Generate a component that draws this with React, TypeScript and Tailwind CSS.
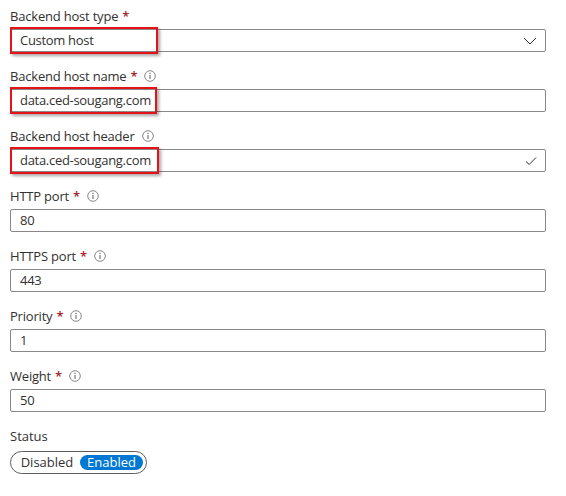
import React from "react";

const font = { fontFamily: '"Open Sans", "Noto Sans", sans-serif' };

function InfoIcon() {
    return (
        <svg width="12" height="12" viewBox="0 0 12 12" className="ml-[7px]">
            <circle cx="6" cy="6" r="5.3" fill="none" stroke="#8a8886" strokeWidth="1" />
            <line x1="6" y1="5" x2="6" y2="9" stroke="#605e5c" strokeWidth="1" />
            <circle cx="6" cy="3.4" r="0.7" fill="#605e5c" />
        </svg>
    );
}

function Chevron() {
    return (
        <svg width="14" height="8" viewBox="0 0 14 8">
            <path d="M1 1 L7 7 L13 1" fill="none" stroke="#323130" strokeWidth="1" />
        </svg>
    );
}

function Check() {
    return (
        <svg width="12" height="10" viewBox="0 0 12 10">
            <path d="M1 5.5 L4.2 8.5 L11 1.5" fill="none" stroke="#323130" strokeWidth="1" />
        </svg>
    );
}

interface FieldProps {
    label: string;
    required?: boolean;
    info?: boolean;
    value: string;
    right?: React.ReactNode;
    highlight?: number;
}

function Field({ label, required, info, value, right, highlight }: FieldProps) {
    return (
        <div className="mb-[15px]">
            <div className="flex items-center h-[18px] text-[13px] leading-[18px] tracking-[-0.2px] text-[#323130] mb-[4px]">
                <span>{label}</span>
                {required && <span className="text-[#a4262c] ml-[4px] font-semibold">*</span>}
                {info && <InfoIcon />}
            </div>
            <div className="relative">
                <div className="flex items-center h-[23px] border border-[#8a8886] rounded-[2px] bg-white pl-[9px] pr-[8px] text-[13px] tracking-[-0.3px] text-[#323130]">
                    <span className="flex-1">{value}</span>
                    {right}
                </div>
                {highlight && (
                    <div
                        className="absolute left-0 top-[-2px] h-[27px] border-2 border-[#e5121a] shadow-[2px_2px_3px_rgba(0,0,0,0.35)]"
                        style={{ width: highlight }}
                    />
                )}
            </div>
        </div>
    );
}

export default function App() {
    return (
        <div className="w-[566px] h-[496px] bg-white pt-[7px] pl-[10px]" style={font}>
            <div className="w-[536px]">
                <Field label="Backend host type" required value="Custom host" right={<Chevron />} highlight={148} />
                <Field label="Backend host name" required info value="data.ced-sougang.com" highlight={147} />
                <Field label="Backend host header" info value="data.ced-sougang.com" right={<Check />} highlight={149} />
                <Field label="HTTP port" required info value="80" />
                <Field label="HTTPS port" required info value="443" />
                <Field label="Priority" required info value="1" />
                <Field label="Weight" required info value="50" />
                <div className="text-[13px] leading-[18px] text-[#323130] mb-[4px] mt-[1px]">Status</div>
                <div className="inline-flex items-center h-[23px] w-[137px] border border-[#605e5c] rounded-full px-[3px] text-[13px] text-[#323130]">
                    <span className="flex-1 text-center">Disabled</span>
                    <span className="h-[15px] leading-[15px] w-[63px] text-center bg-[#0078d4] text-white rounded-full">Enabled</span>
                </div>
            </div>
        </div>
    );
}
